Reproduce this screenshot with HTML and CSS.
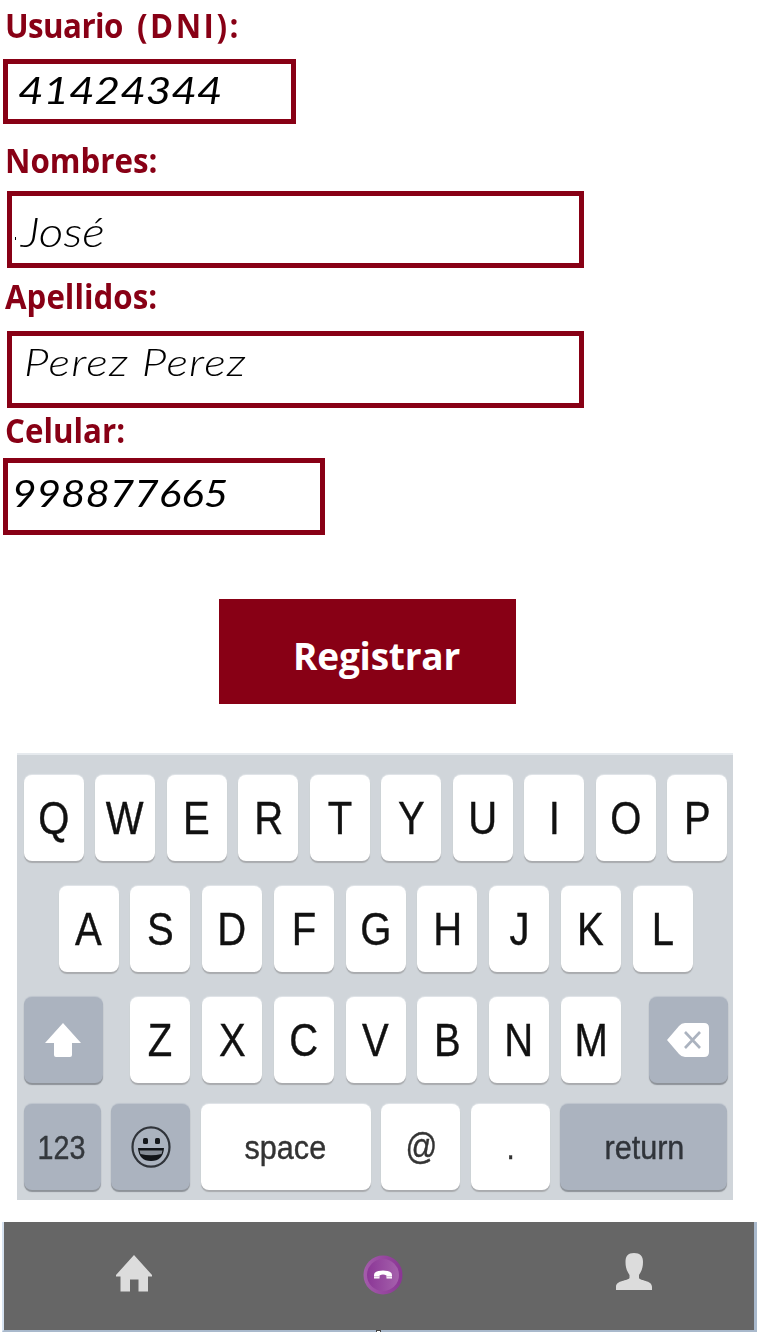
FILE: index.html
```html
<!DOCTYPE html>
<html lang="es">
<head>
<meta charset="utf-8">
<title>Registro</title>
<link rel="stylesheet" href="styles.css">
</head>
<body>
<main class="screen">
  <form class="form">
    <label class="label usuario-label">Usuario <span class="dni-tag">(DNI):</span></label>
    <div class="field field-dni"><span class="ink digits dni">41424344</span></div>
    <label class="label nombres-label">Nombres:</label>
    <div class="field field-name"><i class="tick"></i><span class="ink nombre">José</span></div>
    <label class="label apellidos-label">Apellidos:</label>
    <div class="field field-name field-last"><span class="ink apellido">Perez Perez</span></div>
    <label class="label celular-label">Celular:</label>
    <div class="field field-cel"><span class="ink digits cel">998877665</span></div>
    <div class="submit"><span>Registrar</span></div>
  </form>

  <section class="keyboard">
    <div class="row">
      <div class="key"><span>Q</span></div><div class="key"><span>W</span></div><div class="key"><span>E</span></div><div class="key"><span>R</span></div><div class="key"><span>T</span></div><div class="key"><span>Y</span></div><div class="key"><span>U</span></div><div class="key"><span>I</span></div><div class="key"><span>O</span></div><div class="key"><span>P</span></div>
    </div>
    <div class="row row-home">
      <div class="key"><span>A</span></div><div class="key"><span>S</span></div><div class="key"><span>D</span></div><div class="key"><span>F</span></div><div class="key"><span>G</span></div><div class="key"><span>H</span></div><div class="key"><span>J</span></div><div class="key"><span>K</span></div><div class="key"><span>L</span></div>
    </div>
    <div class="row row-lower">
      <div class="key dark shift"><svg width="38" height="36" viewBox="0 0 38 36"><path d="M19 1 L37 21 H28 V33 Q28 35 26 35 H12 Q10 35 10 33 V21 H1 Z" fill="#fff"/></svg></div>
      <div class="key"><span>Z</span></div><div class="key"><span>X</span></div><div class="key"><span>C</span></div><div class="key"><span>V</span></div><div class="key"><span>B</span></div><div class="key"><span>N</span></div><div class="key"><span>M</span></div>
      <div class="key dark erase"><svg width="44" height="36" viewBox="0 0 44 36"><path d="M1 18 L13 4 Q15.500 1 19 1 H38 Q43 1 43 6 V30 Q43 35 38 35 H19 Q15.500 35 13 32 Z" fill="#fff"/><path d="M19 10 L34 26 M34 10 L19 26" stroke="#abb3bf" stroke-width="2.600" fill="none"/></svg></div>
    </div>
    <div class="row row-bottom">
      <div class="key dark k-num"><span>123</span></div>
      <div class="key dark k-emoji"><svg width="40" height="42" viewBox="0 0 40 42"><ellipse cx="20" cy="21" rx="18.500" ry="19.700" fill="none" stroke="#30343a" stroke-width="2.200"/><rect x="12" y="12" width="5" height="6" rx="1.500" fill="#15181c"/><rect x="24" y="12" width="5" height="6" rx="1.500" fill="#15181c"/><path d="M7 22 H33 Q32 35 20 35 Q8 35 7 22Z" fill="#111418"/><path d="M8.500 24.500 H31.500 L30.500 28 Q20 30.500 9.500 28Z" fill="#858c96"/></svg></div>
      <div class="key k-space"><span>space</span></div>
      <div class="key k-at"><span>@</span></div>
      <div class="key k-dot"><span>.</span></div>
      <div class="key dark k-return"><span>return</span></div>
    </div>
  </section>

  <nav class="tabs">
    <svg class="home" width="36" height="37" viewBox="0 0 36 37"><path d="M18 0 L36 20 V21.500 H32 V36.500 H22.500 V24.500 H14 V36.500 H4.500 V21.500 H0 V20 Z" fill="#dcdcdc"/></svg>
    <svg class="call" width="40" height="40" viewBox="0 0 40 40">
      <defs>
        <linearGradient id="rim"><stop offset="0" stop-color="#a45cab"/><stop offset="1" stop-color="#8a3594"/></linearGradient>
        <linearGradient id="face"><stop offset="0" stop-color="#8b3796"/><stop offset="1" stop-color="#a561ac"/></linearGradient>
      </defs>
      <circle cx="20" cy="20" r="19.500" fill="url(#rim)"/>
      <circle cx="20" cy="20" r="16" fill="url(#face)"/>
      <path d="M11 23.500 V20 Q11 15.500 20 15.500 Q29 15.500 29 20 V23.500 H23.500 V20.500 Q20 18.500 16.500 20.500 V23.500 Z" fill="#fff"/>
      <path d="M11 21.700 H16.500 M23.500 21.700 H29" stroke="#c79bcb" stroke-width=".8"/>
    </svg>
    <svg class="person" width="36" height="38" viewBox="0 0 36 38"><path d="M18 0 C24 0 27 3 27 9 C27 15 25.500 18 23 22 V25 C24 28 36 27 36 34 V37 H0 V34 C0 27 12 28 13.500 25 V22 C11 18 9.500 15 9.500 9 C9.500 3 12 0 18 0Z" fill="#dcdcdc"/></svg>
    <i class="handle"></i>
  </nav>
</main>
</body>
</html>
```

FILE: styles.css
```css
* { box-sizing: border-box; }
body { margin: 0; background: #fff; }
.screen { width: 757px; height: 1332px; overflow: hidden; display: flex; flex-direction: column; }

.form { height: 753px; display: flex; flex-direction: column; align-items: flex-start; }
.label {
  color: #880015;
  font-family: "Comic Sans MS", "Open Sans", sans-serif;
  font-size: 34px;
  font-weight: 700;
  line-height: 50px;
  white-space: nowrap;
  padding-left: 5px;
  transform: scaleX(.92);
  transform-origin: 5px 0;
}
.usuario-label { height: 59px; letter-spacing: -0.6px; word-spacing: 7px; }
.dni-tag { letter-spacing: 2.700px; }
.nombres-label { height: 67px; padding-top: 11px; }
.apellidos-label { height: 63px; padding-top: 3px; }
.celular-label { height: 50px; line-height: 45px; }

.field { border: 5px solid #880015; display: flex; align-items: flex-start; }
.field-dni { width: 293px; height: 65px; margin-left: 3px; }
.field-name { width: 577px; height: 77px; margin-left: 7px; }
.field-cel { width: 322px; height: 77px; margin-left: 3px; }
.ink {
  font-family: "Ink Free", Lato, sans-serif;
  font-style: italic;
  font-weight: 300;
  font-size: 37px;
  line-height: 40px;
  color: #000;
  white-space: nowrap;
  transform-origin: 0 0;
}
.digits { font-weight: 400; }
.dni { margin: 6px 0 0 10px; transform: scaleX(1.19); }
.nombre { margin: 16px 0 0 5px; transform: scaleX(1.17); font-size: 41px; }
.apellido { margin: 6px 0 0 12px; letter-spacing: 1px; transform: scaleX(1.235); }
.cel { margin: 10px 0 0 4px; transform: scaleX(1.14); }
.tick { width: 1px; height: 3px; margin: 41px 0 0 3px; background: #000; }

.submit {
  width: 297px; height: 105px; margin: 64px 0 0 219px; padding: 28px 0 0 74px;
  background: #880015; color: #fff;
  font: 700 37px/58px "Comic Sans MS", "Open Sans", sans-serif;
  letter-spacing: -0.2px;
}

.keyboard {
  width: 716px; height: 447px; margin-left: 17px; padding: 20px 5.500px 0 6.500px;
  background: #d0d5da; border-top: 2px solid #e6eaee;
  display: flex; flex-direction: column; gap: 25px;
}
.row { display: flex; justify-content: space-between; height: 86px; }
.row-home { padding: 0 35px; }
.row-lower { gap: 11px; }
.row-bottom { margin-top: -4px; }
.key {
  width: 60px; height: 86px; border-radius: 8px;
  background: #fff; color: #111;
  box-shadow: 0 2px 1px #a9abae, 0 -1px 1px #e1e5e9;
  display: flex; align-items: center; justify-content: center;
  font: 46px/1 "Liberation Sans", Arial, sans-serif;
}
.key span { transform: scaleX(.87); filter: blur(.4px); -webkit-text-stroke: .4px currentColor; }
.dark { background: #abb3bf; box-shadow: 0 2px 1px #8d9298, 0 -1px 1px #bdc4cd; }
.shift { width: 79px; margin-right: 16px; }
.erase { width: 79px; margin-left: 16px; }
.k-num { width: 77px; font-size: 33px; color: #34383d; }
.k-emoji { width: 79px; }
.k-space { width: 170px; font-size: 34px; color: #333; }
.k-space span, .k-return span { transform: scaleX(.9); }
.k-at { width: 79px; font-size: 36px; color: #333; }
.k-dot { width: 79px; font-size: 34px; color: #333; }
.k-return { width: 167px; font-size: 34px; color: #30343a; }

.tabs {
  position: relative; width: 755px; height: 110px; margin: 22px 0 0 2px;
  border: solid #a9b9cc; border-width: 0 3px 2px 2px; border-left-color: #d6e2f0;
  background: #666; display: flex; align-items: flex-start;
}
.home { margin: 33px 0 0 112px; }
.call { margin: 33px 0 0 211px; }
.person { margin: 31px 0 0 213px; }
.handle { position: absolute; left: 372px; bottom: -2px; width: 5px; height: 2px; background: #fff; border: solid #444; border-width: 1px 1px 0; }
```
